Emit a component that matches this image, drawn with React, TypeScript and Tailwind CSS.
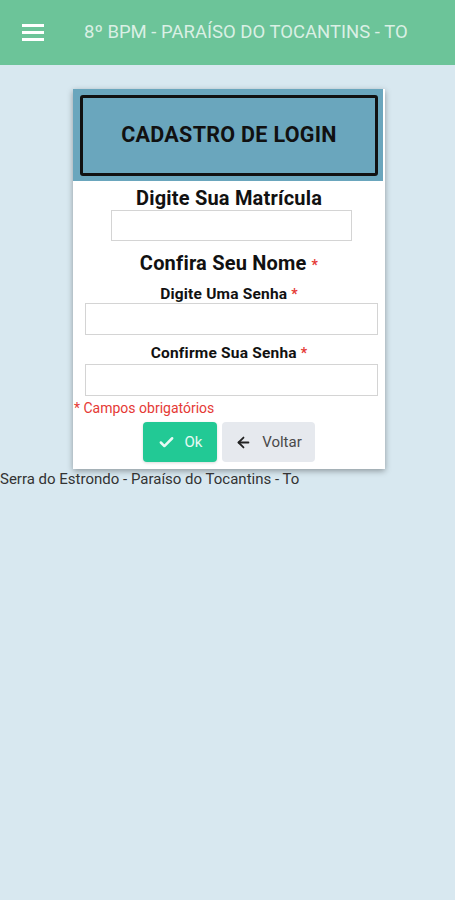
import React, { useState } from 'react';
import { Check, ArrowLeft } from 'lucide-react';

const Label: React.FC<{ text: string; big?: boolean; req?: boolean }> = ({ text, big, req }) => (
  <div className={`text-center font-bold text-[#111] ${big ? 'text-[20px] leading-[22px] tracking-[0.2px]' : 'text-[15.5px] leading-[18px] tracking-[0.2px]'}`}>
    {text}
    {req && <span className={`text-[#e53935] ${big ? 'text-[14px] ml-[5px]' : 'text-[14px] ml-[4px]'}`}>*</span>}
  </div>
);

const App: React.FC = () => {
  const [matricula, setMatricula] = useState('');
  const [senha, setSenha] = useState('');
  const [confirma, setConfirma] = useState('');

  return (
    <div className="min-h-[900px] bg-[#d8e8f0] font-['Roboto',sans-serif]">
      {/* top bar */}
      <div className="h-[65px] bg-[#6cc499] flex items-center">
        <div className="ml-[22px] w-[22px] flex flex-col gap-[4.5px]">
          <span className="block h-[2.5px] bg-white" />
          <span className="block h-[2.5px] bg-white" />
          <span className="block h-[2.5px] bg-white" />
        </div>
        <h1 className="ml-[40px] text-[18.5px] text-white/75">8º BPM - PARAÍSO DO TOCANTINS - TO</h1>
      </div>

      <div className="pt-[24px]">
        <div className="ml-[73px] w-[312px] bg-white shadow-[0_2px_6px_rgba(0,0,0,0.35)] pb-[7px]">
          <div className="bg-[#6aa6bd] mr-[2px] pt-[6px] pb-[5px] pl-[7px] pr-[5px]">
            <div className="h-[81px] border-[3px] border-[#111] rounded-[3px] flex items-center justify-center">
              <span className="text-[21.5px] font-bold text-[#111] tracking-[0.3px]">CADASTRO DE LOGIN</span>
            </div>
          </div>

          <div className="pt-[6px]">
            <Label text="Digite Sua Matrícula" big />
            <input
              value={matricula}
              onChange={(e) => setMatricula(e.target.value)}
              className="block ml-[38px] mt-[1px] w-[241px] h-[31px] border border-[#d4d4d4] outline-none px-2 text-sm"
            />
            <div className="mt-[11px]">
              <Label text="Confira Seu Nome" big req />
            </div>
            <div className="mt-[9px]">
              <Label text="Digite Uma Senha" req />
            </div>
            <input
              type="password"
              value={senha}
              onChange={(e) => setSenha(e.target.value)}
              className="block ml-[12px] w-[293px] h-[32px] border border-[#d4d4d4] outline-none px-2 text-sm"
            />
            <div className="mt-[9px]">
              <Label text="Confirme Sua Senha" req />
            </div>
            <input
              type="password"
              value={confirma}
              onChange={(e) => setConfirma(e.target.value)}
              className="block ml-[12px] mt-[2px] w-[293px] h-[32px] border border-[#d4d4d4] outline-none px-2 text-sm"
            />
            <div className="mt-[4px] pl-[1px] text-[14px] leading-[16px] text-[#e53935]">* Campos obrigatórios</div>
            <div className="mt-[6px] flex justify-center gap-[5px]">
              <button className="w-[74px] h-[40px] rounded-[4px] bg-[#22c995] text-white/90 text-[15px] flex items-center justify-center gap-[10px] shadow-[0_1px_3px_rgba(0,0,0,0.15)]">
                <Check size={17} strokeWidth={3.5} />
                <span>Ok</span>
              </button>
              <button className="w-[93px] h-[40px] rounded-[4px] bg-[#e6e9ee] text-[#4a4a4a] text-[15px] flex items-center justify-center gap-[10px]">
                <ArrowLeft size={17} strokeWidth={2.5} className="text-[#222]" />
                <span>Voltar</span>
              </button>
            </div>
          </div>
        </div>
        <div className="mt-[1px] text-[15px] leading-[18px] text-[#333]">Serra do Estrondo - Paraíso do Tocantins - To</div>
      </div>
    </div>
  );
};

export default App;
